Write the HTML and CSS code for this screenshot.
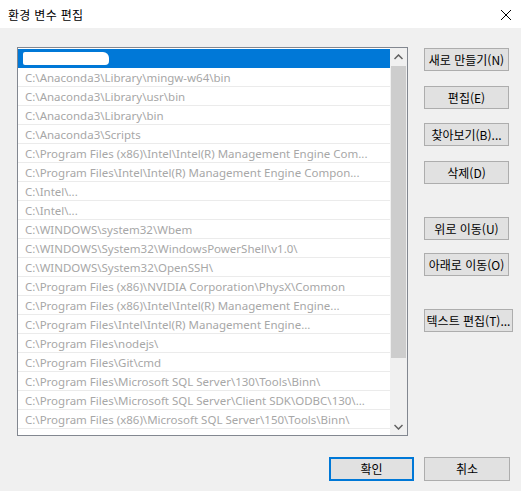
FILE: index.html
```html
<!DOCTYPE html>
<html lang="ko">
<head>
<meta charset="utf-8">
<title>환경 변수 편집</title>
<link rel="stylesheet" href="styles.css">
</head>
<body>
<div class="window">
  <div class="titlebar">
    <span class="title">환경 변수 편집</span>
    <svg class="close" width="12" height="12" viewBox="0 0 12 12"><path d="M1 1 L11 11 M11 1 L1 11" stroke="#000" stroke-width="1" fill="none"/></svg>
  </div>
  <div class="content">
    <div class="listbox">
      <div class="rows">
        <div class="row selected"><span class="blob"></span></div>
        <div class="row"><span class="t">C:\Anaconda3\Library\mingw-w64\bin</span></div>
        <div class="row"><span class="t">C:\Anaconda3\Library\usr\bin</span></div>
        <div class="row"><span class="t">C:\Anaconda3\Library\bin</span></div>
        <div class="row"><span class="t">C:\Anaconda3\Scripts</span></div>
        <div class="row"><span class="t">C:\Program Files (x86)\Intel\Intel(R) Management Engine Com...</span></div>
        <div class="row"><span class="t">C:\Program Files\Intel\Intel(R) Management Engine Compon...</span></div>
        <div class="row"><span class="t">C:\Intel\...</span></div>
        <div class="row"><span class="t">C:\Intel\...</span></div>
        <div class="row"><span class="t">C:\WINDOWS\system32\Wbem</span></div>
        <div class="row"><span class="t">C:\WINDOWS\System32\WindowsPowerShell\v1.0\</span></div>
        <div class="row"><span class="t">C:\WINDOWS\System32\OpenSSH\</span></div>
        <div class="row"><span class="t">C:\Program Files (x86)\NVIDIA Corporation\PhysX\Common</span></div>
        <div class="row"><span class="t">C:\Program Files (x86)\Intel\Intel(R) Management Engine...</span></div>
        <div class="row"><span class="t">C:\Program Files\Intel\Intel(R) Management Engine...</span></div>
        <div class="row"><span class="t">C:\Program Files\nodejs\</span></div>
        <div class="row"><span class="t">C:\Program Files\Git\cmd</span></div>
        <div class="row"><span class="t">C:\Program Files\Microsoft SQL Server\130\Tools\Binn\</span></div>
        <div class="row"><span class="t">C:\Program Files\Microsoft SQL Server\Client SDK\ODBC\130\...</span></div>
        <div class="row"><span class="t">C:\Program Files (x86)\Microsoft SQL Server\150\Tools\Binn\</span></div>
        <div class="row"><span class="t">C:\Program Files\Microsoft SQL Server\150\Tools\Binn\</span></div>
      </div>
      <div class="scrollbar">
        <div class="arrow">
          <svg width="9" height="6" viewBox="0 0 9 6"><path d="M0.5 5 L4.5 1 L8.5 5" stroke="#606060" stroke-width="1.5" fill="none"/></svg>
        </div>
        <div class="track"><div class="thumb"></div></div>
        <div class="arrow">
          <svg width="9" height="6" viewBox="0 0 9 6"><path d="M0.5 1 L4.5 5 L8.5 1" stroke="#606060" stroke-width="1.5" fill="none"/></svg>
        </div>
      </div>
    </div>
    <div class="side">
      <button class="btn">새로 만들기(N)</button>
      <button class="btn gap15">편집(E)</button>
      <button class="btn gap14">찾아보기(B)...</button>
      <button class="btn gap15">삭제(D)</button>
      <button class="btn gap33">위로 이동(U)</button>
      <button class="btn gap13">아래로 이동(O)</button>
      <button class="btn gap33 wide">텍스트 편집(T)...</button>
    </div>
  </div>
  <div class="footer">
    <button class="btn primary">확인</button>
    <button class="btn">취소</button>
  </div>
</div>
</body>
</html>
```

FILE: styles.css
```css
* { box-sizing: border-box; }
html, body { margin: 0; padding: 0; }
body {
  font-family: "Noto Sans CJK KR", "Noto Sans", sans-serif;
  font-size: 12px;
  color: #000;
  background: #f0f0f0;
}
.window {
  width: 521px;
  height: 491px;
  background: #f0f0f0;
  display: flex;
  flex-direction: column;
  overflow: hidden;
}
.titlebar {
  height: 28px;
  background: #fff;
  display: flex;
  align-items: center;
  justify-content: space-between;
  padding: 0 9px 0 8px;
}
.title { font-size: 12px; letter-spacing: 0.3px; }
.close { display: block; margin-top: 1px; }
.content {
  display: flex;
  padding: 19px 0 0 17px;
}
.listbox {
  width: 391px;
  height: 389px;
  border: 1px solid #828790;
  background: #fff;
  display: flex;
  overflow: hidden;
}
.rows {
  width: 372px;
  padding-top: 1px;
  display: flex;
  flex-direction: column;
  overflow: hidden;
}
.row {
  flex: 0 0 19px;
  height: 19px;
  border-bottom: 1px solid #ebebeb;
  display: flex;
  align-items: center;
  padding-left: 7px;
  white-space: nowrap;
  overflow: hidden;
}
.row .t {
  font-family: "Noto Sans", "Liberation Sans", sans-serif;
  font-size: 11.5px;
  color: #8a8a8a;
  opacity: 0.75;
}
.row.selected {
  background: #0078d7;
  border-bottom-color: #0078d7;
  padding-left: 5px;
}
.blob {
  display: block;
  width: 86px;
  height: 13px;
  background: #fff;
  border-radius: 2px 6px 4px 2px;
}
.scrollbar {
  width: 17px;
  display: flex;
  flex-direction: column;
  background: #f0f0f0;
}
.arrow {
  height: 17px;
  display: flex;
  align-items: center;
  justify-content: center;
}
.track { flex: 1; display: flex; flex-direction: column; }
.thumb {
  margin: 1px 1px 0 1px;
  height: 292px;
  background: #cdcdcd;
}
.side {
  display: flex;
  flex-direction: column;
  align-items: flex-start;
  margin-left: 16px;
  padding-top: 1px;
}
.btn {
  font-family: "Noto Sans CJK KR", "Noto Sans", sans-serif;
  font-size: 12px;
  color: #000;
  width: 85px;
  height: 23px;
  padding: 0;
  background: #e1e1e1;
  border: 1px solid #adadad;
  border-radius: 0;
  white-space: nowrap;
  line-height: 20px;
}
.gap15 { margin-top: 15px; }
.gap14 { margin-top: 14px; }
.gap13 { margin-top: 13px; }
.gap33 { margin-top: 33px; }
.btn.wide { width: 89px; }
.footer {
  display: flex;
  justify-content: flex-end;
  gap: 10px;
  padding: 21px 11px 0 0;
}
.footer .btn { height: 24px; width: 86px; }
.footer .btn.primary {
  width: 85px;
  border: 2px solid #0078d7;
}
```
